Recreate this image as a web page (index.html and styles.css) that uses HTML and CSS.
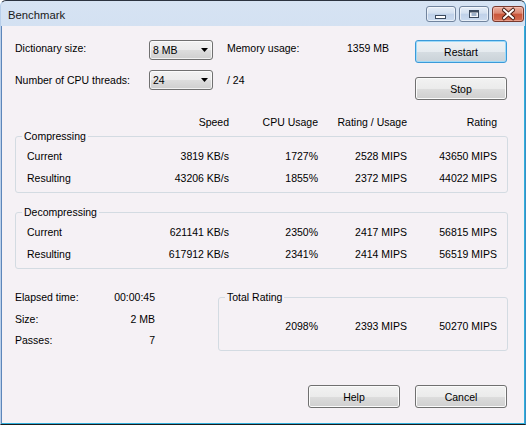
FILE: index.html
```html
<!DOCTYPE html>
<html>
<head>
<meta charset="utf-8">
<title>Benchmark</title>
<link rel="stylesheet" href="styles.css">
</head>
<body>
<div class="window">
  <div class="titlebar">
    <span class="title">Benchmark</span>
    <div class="caps">
      <div class="cap cap-min">
        <svg width="12" height="14" viewBox="0 0 12 14"><rect x="0.5" y="8.5" width="10" height="3" fill="#ffffff" stroke="#3b4a5e"/></svg>
      </div>
      <div class="cap cap-max">
        <svg width="11" height="14" viewBox="0 0 11 14"><rect x="0.5" y="3.5" width="9" height="7" fill="#f4f7fb" stroke="#3b4a5e"/><rect x="1" y="4" width="8" height="1.5" fill="#3b4a5e"/><rect x="2.5" y="6" width="5" height="3" fill="#9fb2ca"/></svg>
      </div>
      <div class="cap cap-close">
        <svg width="13" height="14" viewBox="0 0 13 14"><path d="M2 3 L11 11 M11 3 L2 11" stroke="#4a1c12" stroke-width="4" stroke-linecap="square"/><path d="M2 3 L11 11 M11 3 L2 11" stroke="#ffffff" stroke-width="2" stroke-linecap="square"/></svg>
      </div>
    </div>
  </div>
  <div class="client">
    <div class="top">
      <div class="settings">
        <span class="lbl r1">Dictionary size:</span>
        <div class="combo"><span>8 MB</span><svg class="arrow" width="7" height="4" viewBox="0 0 7 4"><path d="M0 0 H7 L3.5 4 Z" fill="#000"/></svg></div>
        <span class="lbl r1">Memory usage:</span>
        <span class="lbl r1">1359 MB</span>
        <span class="lbl r2">Number of CPU threads:</span>
        <div class="combo"><span>24</span><svg class="arrow" width="7" height="4" viewBox="0 0 7 4"><path d="M0 0 H7 L3.5 4 Z" fill="#000"/></svg></div>
        <span class="lbl r2">/ 24</span>
      </div>
      <div class="side-buttons">
        <div class="btn btn-default">Restart</div>
        <div class="btn">Stop</div>
      </div>
    </div>

    <div class="cols header">
      <span></span><span class="num">Speed</span><span class="num">CPU Usage</span><span class="num">Rating / Usage</span><span class="num">Rating</span>
    </div>

    <div class="group group-comp">
      <div class="legend">Compressing</div>
      <div class="cols rows">
        <span>Current</span><span class="num">3819 KB/s</span><span class="num">1727%</span><span class="num">2528 MIPS</span><span class="num">43650 MIPS</span>
        <span>Resulting</span><span class="num">43206 KB/s</span><span class="num">1855%</span><span class="num">2372 MIPS</span><span class="num">44022 MIPS</span>
      </div>
    </div>

    <div class="group group-decomp">
      <div class="legend">Decompressing</div>
      <div class="cols rows">
        <span>Current</span><span class="num">621141 KB/s</span><span class="num">2350%</span><span class="num">2417 MIPS</span><span class="num">56815 MIPS</span>
        <span>Resulting</span><span class="num">617912 KB/s</span><span class="num">2341%</span><span class="num">2414 MIPS</span><span class="num">56519 MIPS</span>
      </div>
    </div>

    <div class="bottom">
      <div class="stats">
        <span>Elapsed time:</span><span class="num">00:00:45</span>
        <span>Size:</span><span class="num">2 MB</span>
        <span>Passes:</span><span class="num">7</span>
      </div>
      <div class="group group-total">
        <div class="legend">Total Rating</div>
        <div class="total-row">
          <span class="num">2098%</span><span class="num">2393 MIPS</span><span class="num">50270 MIPS</span>
        </div>
      </div>
    </div>

    <div class="footer">
      <div class="btn">Help</div>
      <div class="btn">Cancel</div>
    </div>
  </div>
</div>
</body>
</html>
```

FILE: styles.css
```css
* { box-sizing: border-box; }

html, body {
  margin: 0;
  padding: 0;
  background: #ffffff;
}

body {
  font-family: "Liberation Sans", Arial, sans-serif;
  font-size: 10.5px;
  color: #000000;
}

.window {
  width: 526px;
  height: 425px;
  display: flex;
  flex-direction: column;
  border: 1px solid #2b3340;
  border-left-color: #b9cfea;
  border-right-color: #3a8fc4;
  border-bottom-color: #1c1c1c;
  border-radius: 6px 6px 0 0;
  background: linear-gradient(#d6e3f3, #bfd2ea 60%, #b7cce8);
  overflow: hidden;
}

.titlebar {
  height: 25px;
  flex: none;
  display: flex;
  align-items: flex-start;
  padding: 0 1px 0 7px;
}

.title {
  margin-top: 7px;
  line-height: 14px;
  font-size: 11.3px;
  color: #1a1a1a;
}

.caps {
  margin-left: auto;
  margin-top: 5px;
  display: flex;
  gap: 3px;
}

.cap {
  width: 30px;
  height: 16px;
  display: flex;
  align-items: center;
  justify-content: center;
  border: 1px solid #71849e;
  border-radius: 3px;
  background: linear-gradient(#e6eef8, #d3e0f0 45%, #bfd1e9 50%, #cbdbef);
  box-shadow: inset 0 0 0 1px rgba(255, 255, 255, 0.55);
}

.cap-close {
  width: 32px;
  border-color: #7a3a2e;
  background: linear-gradient(#eab0a0, #dc8670 45%, #c9553a 50%, #d46c50);
  box-shadow: inset 0 0 0 1px rgba(255, 210, 200, 0.5);
}

.client {
  flex: 1;
  display: flex;
  flex-direction: column;
  background: #f5f1f5;
  border-left: 1px solid #5d86ba;
  border-right: 1px solid #2fb0dd;
  border-bottom: 1px solid #2fb0dd;
  padding: 14px 16px 15px 13px;
}

.top {
  display: flex;
  align-items: flex-start;
}

.settings {
  display: grid;
  grid-template-columns: 134px 78px 120px auto;
  grid-template-rows: 20px 20px;
  row-gap: 10px;
}

.lbl { white-space: nowrap; }
.lbl.r1 { line-height: 16px; }
.lbl.r2 { line-height: 20px; }

.combo {
  width: 64px;
  height: 20px;
  display: flex;
  align-items: center;
  justify-content: space-between;
  padding: 0 4px 0 3px;
  border: 1px solid #707070;
  border-radius: 3px;
  background: linear-gradient(#f2f2f2, #ebebeb 50%, #dddddd 50%, #cfcfcf);
  box-shadow: inset 0 0 0 1px rgba(255, 255, 255, 0.7);
}

.arrow { display: block; }

.side-buttons {
  margin-left: auto;
  margin-right: 1px;
  display: flex;
  flex-direction: column;
  gap: 14px;
}

.btn {
  width: 92px;
  height: 23px;
  display: flex;
  align-items: center;
  justify-content: center;
  border: 1px solid #707070;
  border-radius: 3px;
  background: linear-gradient(#f2f2f2, #ebebeb 50%, #dddddd 50%, #cfcfcf);
  box-shadow: inset 0 0 0 1px #fbfbfb;
}

.btn-default {
  border-color: #3a9ad9;
  background: linear-gradient(#eef2f5, #e6ebef 50%, #d6dde2 50%, #cad2d8);
  box-shadow: inset 0 0 0 1px #9fdaf8;
}

.cols {
  display: grid;
  grid-template-columns: 112px 90px 89px 89px 90px;
}

.num {
  text-align: right;
  white-space: nowrap;
}

.header {
  margin-top: 15px;
  padding-left: 12px;
  line-height: 14px;
}

.group {
  border: 1px solid #d3dbe2;
  border-radius: 3px;
}

.legend {
  display: block;
  width: fit-content;
  margin: -7px 0 0 6px;
  padding: 0 2px;
  line-height: 13px;
  background: #f5f1f5;
}

.group-comp { margin-top: 7px; }
.group-decomp { margin-top: 19px; }

.rows {
  padding: 3px 0 3px 11px;
  line-height: 21.5px;
}

.bottom {
  display: flex;
  align-items: flex-start;
}

.stats {
  margin-top: 18px;
  display: grid;
  grid-template-columns: 75px 65px;
  line-height: 21.5px;
}

.group-total {
  margin-left: auto;
  margin-top: 28px;
  width: 290px;
}

.total-row {
  display: grid;
  grid-template-columns: 99px 89px 90px;
  padding: 12px 0 13px 0;
  line-height: 21px;
}

.footer {
  margin-top: auto;
  margin-right: 1px;
  display: flex;
  justify-content: flex-end;
  gap: 15px;
}
```
